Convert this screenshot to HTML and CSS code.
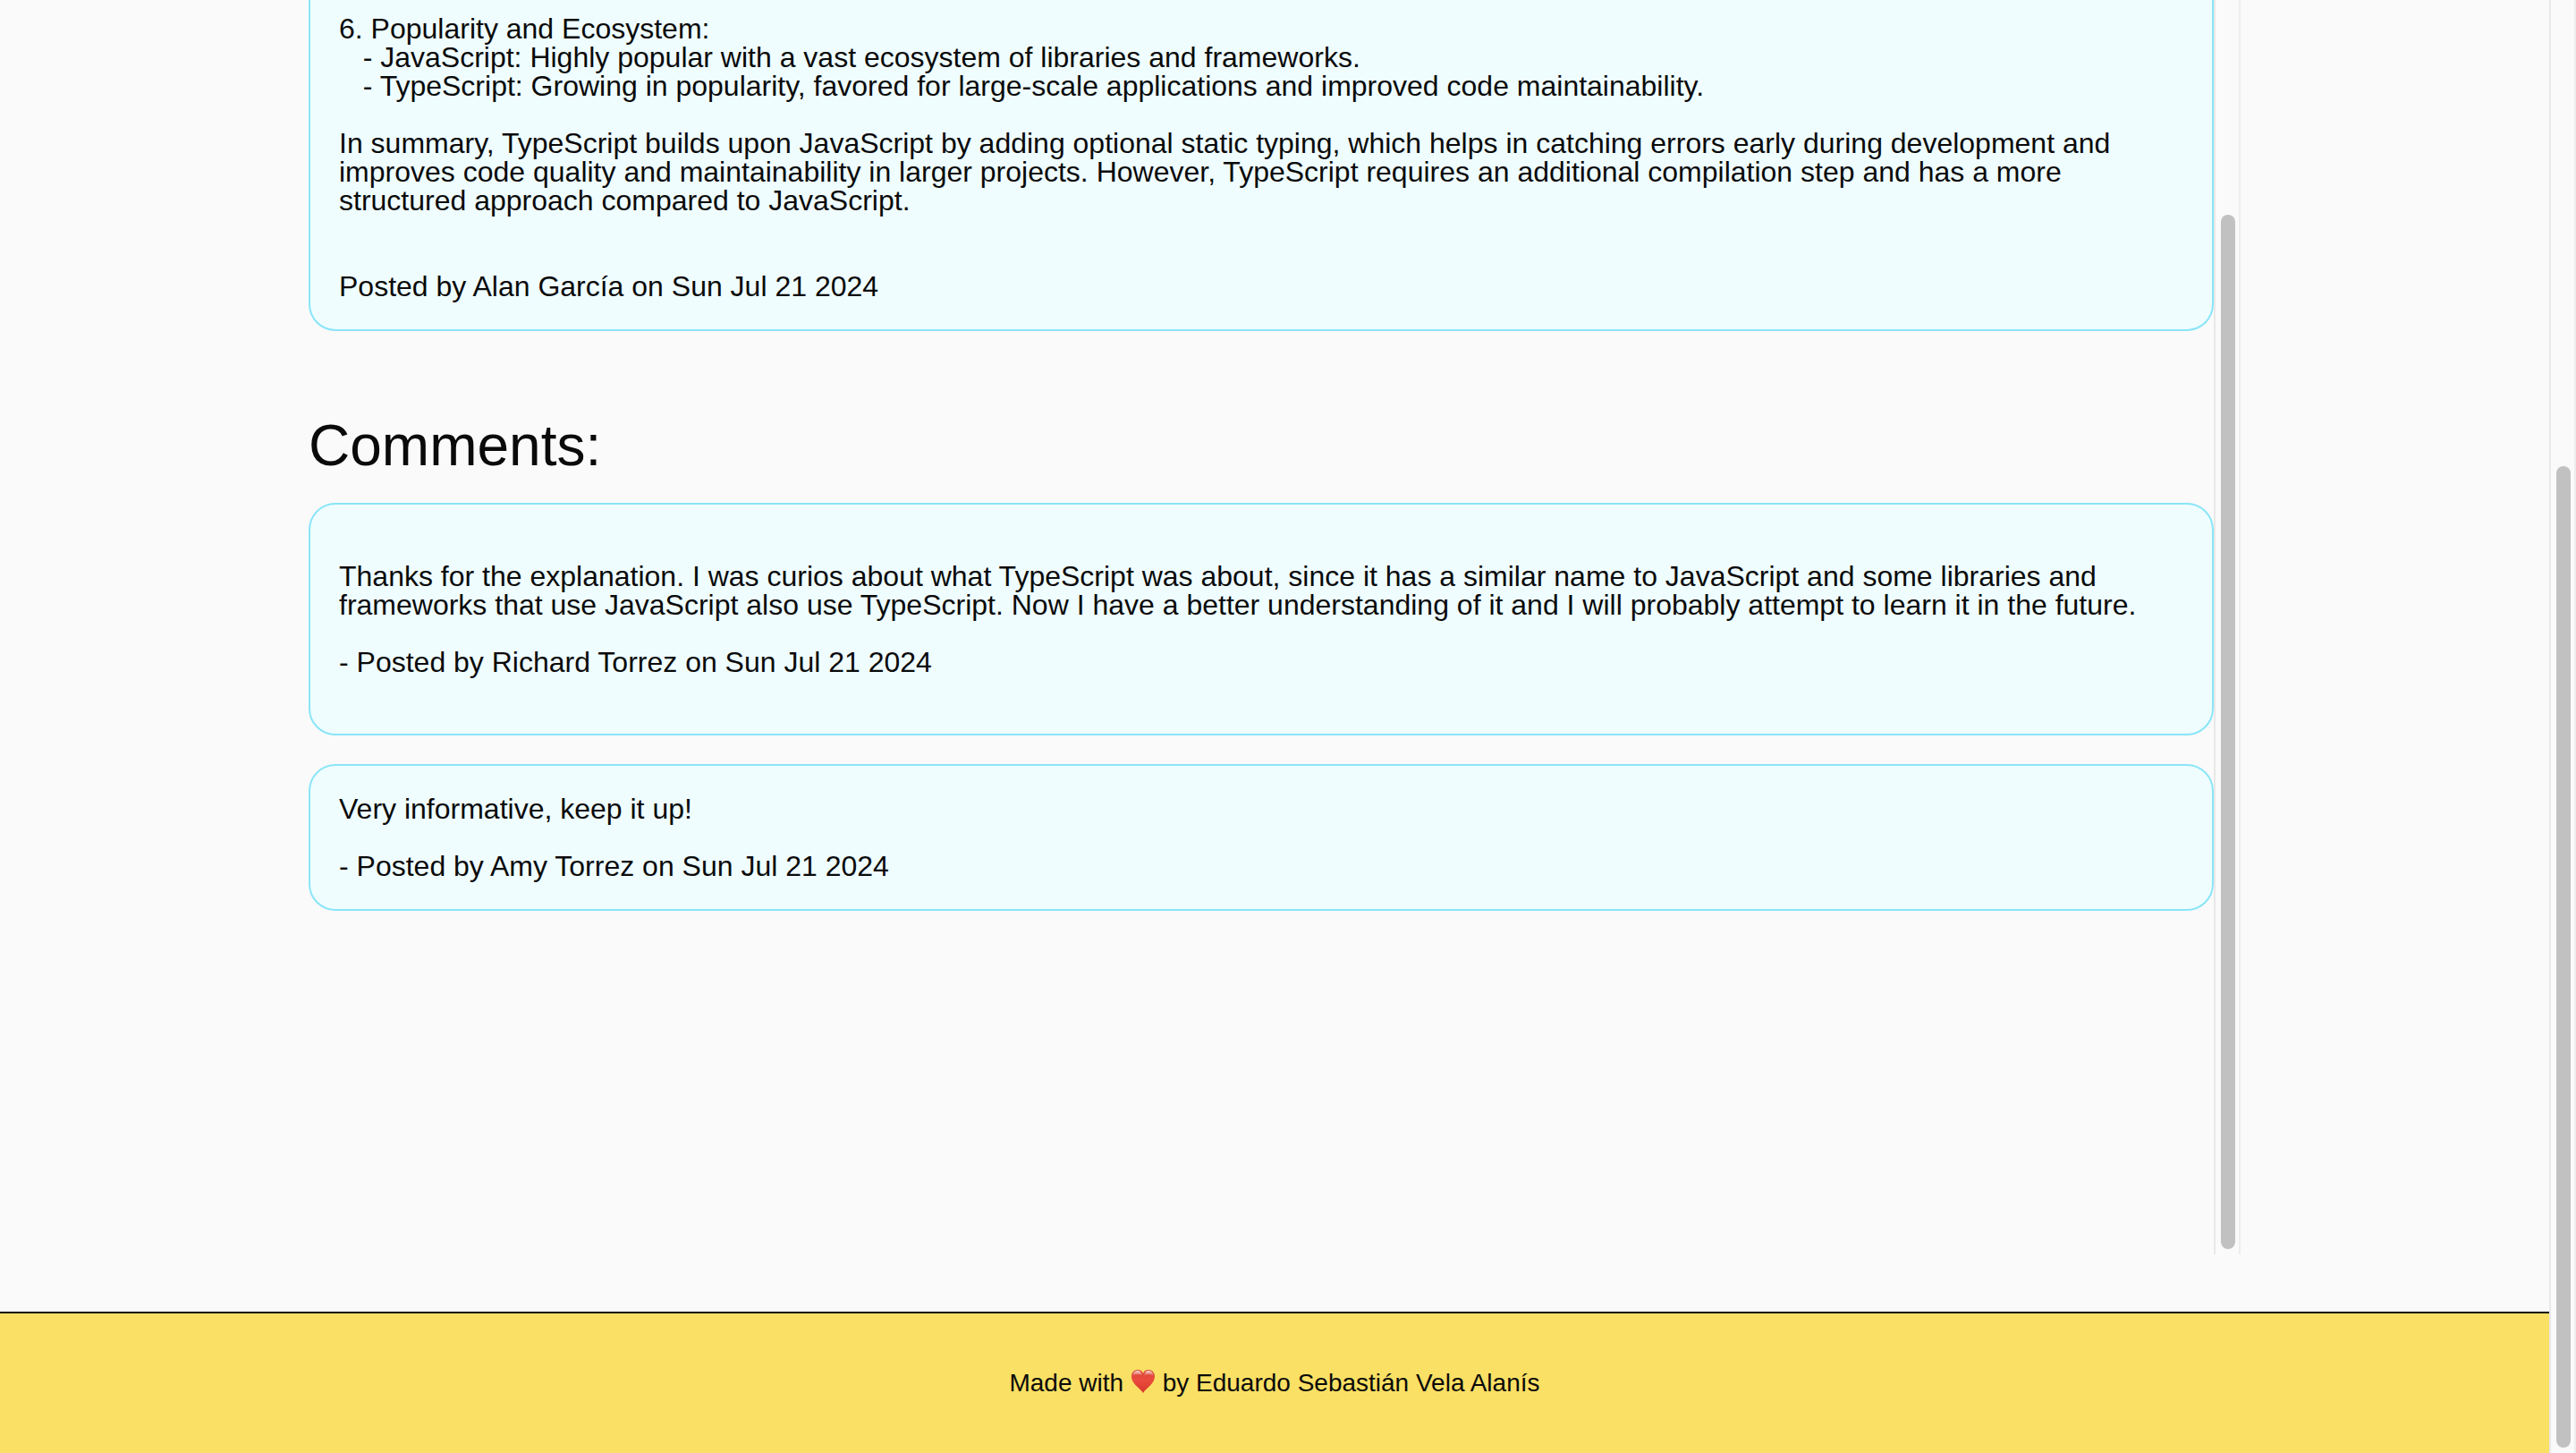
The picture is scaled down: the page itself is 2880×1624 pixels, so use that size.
FILE: index.html
```html
<!DOCTYPE html>
<html lang="en">
<head>
<meta charset="utf-8">
<title>JavaScript vs TypeScript</title>
<link rel="stylesheet" href="styles.css">
</head>
<body>
<div class="page">
  <main class="main">
    <div class="scroller">
      <div class="content">
        <article class="card card-post">
          <p class="text">6. Popularity and Ecosystem:
   - JavaScript: Highly popular with a vast ecosystem of libraries and frameworks.
   - TypeScript: Growing in popularity, favored for large-scale applications and improved code maintainability.</p>
          <p class="text">In summary, TypeScript builds upon JavaScript by adding optional static typing, which helps in catching errors early during development and improves code quality and maintainability in larger projects. However, TypeScript requires an additional compilation step and has a more structured approach compared to JavaScript.</p>
          <p class="byline">Posted by Alan García on Sun Jul 21 2024</p>
        </article>
        <h2 class="heading">Comments:</h2>
        <section class="comments">
          <article class="card card-roomy">
            <p class="text">Thanks for the explanation. I was curios about what TypeScript was about, since it has a similar name to JavaScript and some libraries and frameworks that use JavaScript also use TypeScript. Now I have a better understanding of it and I will probably attempt to learn it in the future.</p>
            <p class="text">- Posted by Richard Torrez on Sun Jul 21 2024</p>
          </article>
          <article class="card">
            <p class="text">Very informative, keep it up!</p>
            <p class="text">- Posted by Amy Torrez on Sun Jul 21 2024</p>
          </article>
        </section>
      </div>
      <div class="track track-content"><div class="thumb"></div></div>
    </div>
  </main>
  <footer class="footer">
    <p class="credit">Made with <svg class="heart" viewBox="0 0 28 26" role="img" aria-label="love"><defs><linearGradient id="shade" x1="0" y1="0" x2="0" y2="1"><stop offset="0" stop-color="#d9453b"/><stop offset=".45" stop-color="#ea4b3c"/><stop offset="1" stop-color="#d5382c"/></linearGradient><linearGradient id="shine" x1="0" y1="0" x2="0" y2="1"><stop offset="0" stop-color="#fff" stop-opacity=".8"/><stop offset="1" stop-color="#fff" stop-opacity="0"/></linearGradient></defs><path fill="url(#shade)" d="M14 26C11.500 21 1 16 1 7.500C1 3 4 0 8 0C11 0 13 1.600 14 4C15 1.600 17 0 20 0C24 0 27 3 27 7.500C27 16 16.500 21 14 26Z"/><path fill="url(#shine)" d="M2.500 7C2.500 3 5 1 8 1C11 1 12.600 3.500 12.600 6.500C9 4.500 5 5 2.500 7ZM15.400 6.500C15.400 3.500 17 1 20 1C23 1 25.500 3 25.500 7C23 5 19 4.500 15.400 6.500Z"/></svg> by Eduardo Sebastián Vela Alanís</p>
  </footer>
</div>
<div class="track track-page"><div class="thumb"></div></div>
</body>
</html>
```
FILE: styles.css
```css
* {
  box-sizing: border-box;
  margin: 0;
  padding: 0;
}

body {
  display: flex;
  min-height: 100vh;
  background: #fafafa;
  color: #0a0a0a;
  font-family: "Liberation Sans", Arial, sans-serif;
  font-size: 32px;
  line-height: 32px;
}

.page {
  flex: 1;
  min-width: 0;
  display: flex;
  flex-direction: column;
}

.main {
  flex: 1;
  display: flex;
  justify-content: center;
  padding-bottom: 64px;
}

.scroller {
  display: flex;
  width: 75vw;
}

.content {
  flex: 1;
  min-width: 0;
}

.card {
  display: flex;
  flex-direction: column;
  gap: 32px;
  padding: 32px;
  border: 2px solid #8ae5f8;
  border-radius: 30px;
  background: #effdff;
}

.card-post {
  padding-top: 16px;
  border-top: 0;
  border-radius: 0 0 30px 30px;
}

.card-roomy {
  padding: 64px 32px;
}

.text {
  white-space: pre-wrap;
}

.byline {
  padding-top: 32px;
}

.heading {
  margin: 96px 0 32px;
  font-size: 64px;
  font-weight: 400;
  line-height: 64px;
}

.comments {
  display: flex;
  flex-direction: column;
  gap: 32px;
}

.track {
  display: flex;
  flex: none;
  width: 30px;
  border-left: 2px solid #e8e8e8;
  border-right: 2px solid #ededed;
  background: #fafafa;
}

.thumb {
  width: 16px;
  margin-left: 6px;
  border-radius: 8px;
  background: #c1c1c1;
}

.track-content {
  padding: 240px 0 6px;
}

.track-page {
  padding: 521px 0 6px;
}

.footer {
  padding: 64px;
  border-top: 2px solid #0a0a0a;
  background: #fae064;
  font-size: 28px;
  line-height: 28px;
  text-align: center;
}

.heart {
  width: 28px;
  height: 26px;
  margin-top: -4px;
  vertical-align: -2px;
}
```
